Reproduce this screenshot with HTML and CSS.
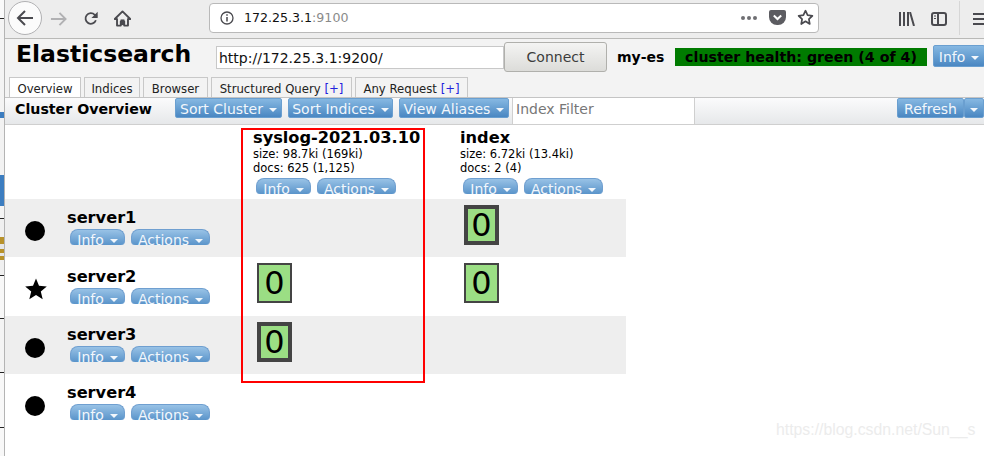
FILE: index.html
```html
<!DOCTYPE html>
<html lang="en">

<head>
    <meta charset="UTF-8">
    <title>Elasticsearch</title>
    <link rel="stylesheet" href="styles.css">
</head>

<body>
    <div class="behind"></div>
    <div class="window">
        <div class="toolbar">
            <span class="nav-back">
                <svg width="20" height="20" viewBox="0 0 20 20"><path d="M18 10H3M10 3l-7 7 7 7" fill="none" stroke="#4a4a4f" stroke-width="2"/></svg>
            </span>
            <svg class="nav-icon fwd" width="17" height="18" viewBox="0 0 18 18"><path d="M1 9h15M10 2.500l6.500 6.500-6.500 6.500" fill="none" stroke="#b1b1b3" stroke-width="2"/></svg>
            <svg class="nav-icon reload" width="16" height="17" viewBox="0 0 18 18"><path d="M14.500 11a6 6 0 1 1-1.300-6.200L15.500 7" fill="none" stroke="#4a4a4f" stroke-width="2"/><path d="M16.500 1.500v7h-7z" fill="#4a4a4f"/></svg>
            <svg class="nav-icon home" width="17" height="17" viewBox="0 0 18 18"><path d="M9 1.500L.8 9.500h2.400V16.500h4V12h3.600v4.500h4V9.500h2.400z" fill="none" stroke="#4a4a4f" stroke-width="2" stroke-linejoin="round"/><rect x="7" y="10" width="4" height="6" fill="#4a4a4f"/></svg>
            <div class="urlbar">
                <svg width="14" height="14" viewBox="0 0 14 14"><circle cx="7" cy="7" r="6" fill="none" stroke="#4a4a4f" stroke-width="1.300"/><path d="M7 6v4.500M7 3.200v1.500" stroke="#4a4a4f" stroke-width="1.500"/></svg>
                <span class="url">172.25.3.1<span class="port">:9100</span></span>
                <span class="dots"><i></i><i></i><i></i></span>
                <svg class="pocket" width="17" height="15" viewBox="0 0 17 15"><path d="M2 0h13a2 2 0 0 1 2 2v5a8 8 0 0 1-8 8h-1a8 8 0 0 1-8-8V2a2 2 0 0 1 2-2z" fill="#5c5c61"/><path d="M4.800 5.500L8.500 9l3.700-3.500" fill="none" stroke="#fff" stroke-width="2"/></svg>
                <svg class="star-outline" width="17" height="17" viewBox="0 0 18 18"><path d="M9 1.800l2.200 4.700 5.100.7-3.700 3.600.9 5.100L9 13l-4.500 2.900.9-5.100L1.700 7.200l5.100-.7z" fill="none" stroke="#4a4a4f" stroke-width="1.800" stroke-linejoin="round"/></svg>
            </div>
            <svg class="nav-icon library" width="16" height="14" viewBox="0 0 16 14"><path d="M1 0v14M5 0v14M9 0v14M11 0l4 14" fill="none" stroke="#4a4a4f" stroke-width="2"/></svg>
            <svg class="nav-icon sidebar" width="16" height="14" viewBox="0 0 16 14"><rect x="1" y="1" width="14" height="12" rx="2" fill="none" stroke="#4a4a4f" stroke-width="2"/><path d="M7 1v12" stroke="#4a4a4f" stroke-width="2"/><path d="M3 4h2M3 6.500h2" stroke="#4a4a4f"/></svg>
            <span class="toolbar-sep"></span>
            <span class="menu"><i></i><i></i><i></i></span>
        </div>

        <div class="page">
            <div class="header">
                <h1>Elasticsearch</h1>
                <input class="conn-input" type="text" value="http://172.25.3.1:9200/">
                <button class="connect">Connect</button>
                <span class="cluster-name">my-es</span>
                <span class="health">cluster health: green (4 of 4)</span>
                <span class="btn info-top">Info<b class="caret"></b></span>
            </div>

            <div class="tabs">
                <span class="tab active">Overview</span>
                <span class="tab tab-indices">Indices</span>
                <span class="tab tab-browser">Browser</span>
                <span class="tab tab-query">Structured Query <em>[+]</em></span>
                <span class="tab tab-any">Any Request <em>[+]</em></span>
            </div>

            <div class="overview-bar">
                <h2>Cluster Overview</h2>
                <span class="btn sort-cluster">Sort Cluster<b class="caret"></b></span>
                <span class="btn sort-indices">Sort Indices<b class="caret"></b></span>
                <span class="btn view-aliases">View Aliases<b class="caret"></b></span>
                <input class="filter" type="text" placeholder="Index Filter">
                <span class="btn refresh">Refresh</span>
                <span class="btn refresh-menu"><b class="caret"></b></span>
            </div>

            <div class="overview">
                <div class="row head-row">
                    <div></div>
                    <div class="index-head">
                        <h3>syslog-2021.03.10</h3>
                        <p>size: 98.7ki (169ki)</p>
                        <p>docs: 625 (1,125)</p>
                        <div class="pills"><span class="pill pill-info">Info<b class="caret"></b></span><span class="pill">Actions<b class="caret"></b></span></div>
                    </div>
                    <div class="index-head">
                        <h3>index</h3>
                        <p>size: 6.72ki (13.4ki)</p>
                        <p>docs: 2 (4)</p>
                        <div class="pills"><span class="pill pill-info">Info<b class="caret"></b></span><span class="pill">Actions<b class="caret"></b></span></div>
                    </div>
                </div>

                <div class="row shaded">
                    <div class="node">
                        <span class="dot"></span>
                        <div>
                            <h4>server1</h4>
                            <div class="pills"><span class="pill pill-info">Info<b class="caret"></b></span><span class="pill">Actions<b class="caret"></b></span></div>
                        </div>
                    </div>
                    <div class="cell"></div>
                    <div class="cell"><span class="shard primary">0</span></div>
                </div>

                <div class="row tall">
                    <div class="node">
                        <svg class="master" width="22" height="22" viewBox="0 0 22 22"><path d="M11 .5l3 7.300 7.800.6-6 5.100 1.900 7.700L11 17l-6.700 4.200 1.900-7.700-6-5.100 7.800-.6z" fill="#000"/></svg>
                        <div>
                            <h4>server2</h4>
                            <div class="pills"><span class="pill pill-info">Info<b class="caret"></b></span><span class="pill">Actions<b class="caret"></b></span></div>
                        </div>
                    </div>
                    <div class="cell"><span class="shard">0</span></div>
                    <div class="cell"><span class="shard">0</span></div>
                </div>

                <div class="row shaded">
                    <div class="node">
                        <span class="dot"></span>
                        <div>
                            <h4>server3</h4>
                            <div class="pills"><span class="pill pill-info">Info<b class="caret"></b></span><span class="pill">Actions<b class="caret"></b></span></div>
                        </div>
                    </div>
                    <div class="cell"><span class="shard primary">0</span></div>
                    <div class="cell"></div>
                </div>

                <div class="row">
                    <div class="node">
                        <span class="dot"></span>
                        <div>
                            <h4>server4</h4>
                            <div class="pills"><span class="pill pill-info">Info<b class="caret"></b></span><span class="pill">Actions<b class="caret"></b></span></div>
                        </div>
                    </div>
                    <div class="cell"></div>
                    <div class="cell"></div>
                </div>
            </div>
        </div>
    </div>

    <!-- annotation and watermark sit on top of the screenshot -->
    <div class="red-box"></div>
    <div class="watermark">https://blog.csdn.net/Sun__s</div>
</body>

</html>
```

FILE: styles.css
```css
* {
    margin: 0;
    padding: 0;
    box-sizing: border-box;
}

body {
    width: 984px;
    height: 456px;
    overflow: hidden;
    display: flex;
    background: #fff;
    font-family: "DejaVu Sans", sans-serif;
    color: #000;
}

.behind {
    width: 5px;
    height: 456px;
    flex: none;
    border-right: 1px solid #b4b4b4;
    background: linear-gradient(to bottom,
        #fafafa 0, #fafafa 18px, #222 18px, #222 19px, #f4f4f4 19px,
        #f4f4f4 112px, #3c7dc0 112px, #3c7dc0 118px, #f2f2f2 118px,
        #f2f2f2 175px, #3c7dc0 175px, #3c7dc0 206px, #f4f4f4 206px,
        #f4f4f4 218px, #222 218px, #222 219px, #f0f0f0 219px,
        #f0f0f0 237px, #b8922a 237px, #b8922a 244px, #e6e6e6 244px,
        #e6e6e6 249px, #b8922a 249px, #b8922a 253px, #e6e6e6 253px,
        #e6e6e6 256px, #b8922a 256px, #b8922a 260px, #f0f0f0 260px,
        #f0f0f0 275px, #222 275px, #222 276px, #f8f8f8 276px,
        #f8f8f8 318px, #222 318px, #222 319px, #f4f4f4 319px,
        #f4f4f4 372px, #222 372px, #222 373px, #f8f8f8 373px,
        #f8f8f8 427px, #222 427px, #222 428px, #f8f8f8 428px);
}

.window {
    width: 979px;
    flex: none;
    display: flex;
    flex-direction: column;
    overflow: hidden;
}

/* browser toolbar */
.toolbar {
    height: 39px;
    flex: none;
    display: flex;
    align-items: center;
    background: #ededed;
    border-bottom: 1px solid #b9b9b7;
    padding-left: 3px;
}

.nav-back {
    width: 34px;
    height: 34px;
    flex: none;
    margin-top: -3px;
    border: 1px solid #b1b1b3;
    border-radius: 50%;
    background: #fbfbfb;
    display: flex;
    align-items: center;
    justify-content: center;
}

.nav-icon {
    flex: none;
    margin-top: -1px;
}

.fwd {
    margin-left: 8px;
}

.reload {
    margin-left: 16px;
}

.home {
    margin-left: 15px;
}

.urlbar {
    width: 610px;
    height: 30px;
    flex: none;
    margin-left: 78px;
    margin-top: -3px;
    padding: 0 4px 0 10px;
    background: #fff;
    border: 1px solid #b9b9b9;
    border-radius: 4px;
    display: flex;
    align-items: center;
}

.url {
    margin-left: 10px;
    font-size: 12.6px;
    color: #111;
    flex: 1;
}

.port {
    color: #8a8a8a;
}

.dots {
    display: flex;
    gap: 2px;
    margin-right: 12px;
}

.dots i {
    width: 4px;
    height: 4px;
    border-radius: 50%;
    background: #6f6f73;
}

.pocket {
    margin-right: 11px;
}

.library {
    margin-left: 80px;
}

.sidebar {
    margin-left: 16px;
}

.toolbar-sep {
    width: 1px;
    height: 34px;
    flex: none;
    margin-left: 12px;
    margin-top: -3px;
    background: #d6d6d6;
}

.menu {
    flex: none;
    margin-left: 13px;
    display: flex;
    flex-direction: column;
    gap: 3px;
    width: 20px;
}

.menu i {
    height: 2px;
    background: #4a4a4f;
}

/* elasticsearch-head page */
.page {
    flex: 1;
    position: relative;
}

.header {
    height: 38px;
    display: flex;
    align-items: center;
    padding-left: 11px;
    background: #f3f3f3;
}

h1 {
    font-size: 23.5px;
    font-weight: bold;
    width: 200px;
    flex: none;
    margin-top: -8px;
}

.conn-input {
    width: 288px;
    height: 23px;
    flex: none;
    margin-top: -1px;
    padding: 0 2px;
    border: 1px solid #c8c8c8;
    font: 14px "DejaVu Sans", sans-serif;
    color: #111;
}

.connect {
    width: 103px;
    height: 30px;
    flex: none;
    margin-top: -2px;
    border: 1px solid #b0b0ac;
    border-radius: 3px;
    background: linear-gradient(to bottom, #f4f4f3, #dcdcd9);
    font: 14px "DejaVu Sans", sans-serif;
    color: #3c3c3c;
}

.cluster-name {
    margin-left: 10px;
    width: 58px;
    flex: none;
    font-size: 14px;
    font-weight: bold;
    margin-top: -2px;
}

.health {
    width: 252px;
    height: 18px;
    flex: none;
    margin-top: -2px;
    background: #007b00;
    font-size: 14.2px;
    font-weight: bold;
    line-height: 18px;
    text-align: center;
}

.btn {
    display: inline-flex;
    align-items: center;
    justify-content: center;
    flex: none;
    height: 20px;
    padding-top: 1px;
    background: linear-gradient(to bottom, #86b8e2, #4a87c2);
    border: 1px solid #6a9fd0;
    border-radius: 2px;
    color: #f2f7fc;
    font-size: 14px;
    white-space: nowrap;
}

.caret {
    display: inline-block;
    margin-left: 6px;
    margin-top: 2px;
    border-left: 4px solid transparent;
    border-right: 4px solid transparent;
    border-top: 4px solid #f2f7fc;
}

.info-top {
    width: 52px;
    height: 22px;
    margin-left: 6px;
    margin-top: -4px;
}

.tabs {
    height: 20px;
    display: flex;
    padding-left: 4px;
    align-items: flex-end;
    font-size: 11.7px;
    background: #f3f3f3;
}

.tab {
    height: 20px;
    flex: none;
    margin-right: 3px;
    padding-top: 1px;
    border: 1px solid #c8c8c8;
    border-bottom: none;
    line-height: 20px;
    color: #222;
    text-align: center;
    white-space: nowrap;
}

.tab em {
    font-style: normal;
    color: #2222dd;
}

.tab.active {
    width: 72px;
    background: #fff;
}

.tab-indices {
    width: 56px;
}

.tab-browser {
    width: 65px;
}

.tab-query {
    width: 141px;
}

.tab-any {
    width: 113px;
}

.overview-bar {
    height: 28px;
    display: flex;
    align-items: flex-start;
    padding-left: 10px;
    border-top: 1px solid #c4c4c4;
    border-bottom: 1px solid #cfcfcf;
    background: linear-gradient(to bottom, #fbfbfc, #e6e8ea);
}

h2 {
    width: 160px;
    flex: none;
    font-size: 14.2px;
    font-weight: bold;
    line-height: 22px;
}

.sort-cluster {
    width: 107px;
}

.sort-indices {
    width: 105px;
    margin-left: 6px;
}

.view-aliases {
    width: 110px;
    margin-left: 6px;
}

.filter {
    width: 183px;
    height: 26px;
    flex: none;
    margin-left: 3px;
    padding: 0 0 4px 3px;
    border: none;
    border-left: 1px solid #cfcfcf;
    border-right: 1px solid #cfcfcf;
    font: 14px "DejaVu Sans", sans-serif;
}

.filter::placeholder {
    color: #777;
}

.refresh {
    width: 67px;
    margin-left: 202px;
}

.refresh-menu {
    width: 20px;
}

.refresh-menu .caret {
    margin-left: 0;
}

.overview {
    width: 621px;
}

.row {
    display: grid;
    grid-template-columns: 242px 207px 172px;
    height: 58px;
}

.head-row {
    height: 74px;
}

.tall {
    height: 59px;
}

.shaded {
    background: #eee;
}

.index-head {
    padding: 4px 0 0 6px;
    font-size: 11.5px;
    line-height: 14px;
}

h3 {
    font-size: 16.2px;
    font-weight: bold;
    line-height: 18px;
}

h4 {
    font-size: 16.2px;
    font-weight: bold;
    line-height: 18px;
}

.pills {
    display: flex;
    gap: 6px;
    margin: 3px 0 0 3px;
}

.node .pills {
    margin-top: 2px;
}

.pill {
    width: 79px;
    height: 16px;
    border: 1px solid #6f9fd0;
    border-bottom: none;
    border-radius: 8px 8px 4px 4px;
    background: linear-gradient(to bottom, #98c2e6, #5a94ca);
    color: #f2f7fc;
    font-size: 14px;
    line-height: 20px;
    text-align: center;
    overflow: hidden;
    white-space: nowrap;
}

.pill-info {
    width: 55px;
}

.pill .caret {
    vertical-align: 2px;
}

.node {
    display: flex;
    align-items: flex-start;
    padding: 10px 0 0 20px;
}

.tall .node {
    padding-top: 11px;
}

.dot {
    width: 20px;
    height: 20px;
    margin-top: 12px;
    margin-right: 22px;
    border-radius: 50%;
    background: #000;
    flex: none;
}

.master {
    margin-top: 10px;
    margin-right: 20px;
    flex: none;
}

.cell {
    padding: 6px 0 0 10px;
}

.shard {
    display: block;
    width: 35px;
    height: 40px;
    border: 2px solid #444;
    background: #9bde84;
    font-size: 32px;
    line-height: 36px;
    text-align: center;
}

.shard.primary {
    border-width: 4px;
    line-height: 32px;
}

.red-box {
    position: absolute;
    left: 241px;
    top: 128px;
    width: 184px;
    height: 255px;
    border: 2px solid #f00;
}

.watermark {
    position: absolute;
    left: 776px;
    top: 421px;
    font: 15.8px "Liberation Sans", sans-serif;
    color: #ececec;
}
```
